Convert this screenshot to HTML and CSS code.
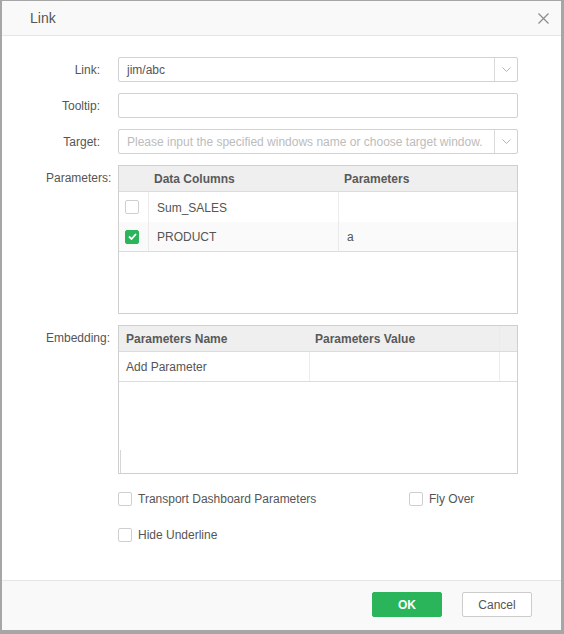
FILE: index.html
```html
<!DOCTYPE html>
<html>
<head>
<meta charset="utf-8">
<link rel="stylesheet" href="styles.css">
</head>
<body>
<div class="dialog">
  <div class="header">
    <span class="title">Link</span>
    <svg class="close" width="11" height="11" viewBox="0 0 11 11"><path d="M0.5 0.5 L10.5 10.5 M10.5 0.5 L0.5 10.5" stroke="#8c8c8c" stroke-width="1.2" fill="none"/></svg>
  </div>
  <div class="content">
    <div class="row">
      <label class="lbl">Link:</label>
      <div class="combo">
        <span class="combo-text">jim/abc</span>
        <span class="combo-btn"><svg width="9" height="5" viewBox="0 0 9 5"><path d="M0.5 0.5 L4.5 4.5 L8.5 0.5" stroke="#b5b5b5" stroke-width="1" fill="none"/></svg></span>
      </div>
    </div>
    <div class="row">
      <label class="lbl">Tooltip:</label>
      <div class="input"></div>
    </div>
    <div class="row">
      <label class="lbl">Target:</label>
      <div class="combo">
        <span class="combo-text placeholder">Please input the specified windows name or choose target window.</span>
        <span class="combo-btn"><svg width="9" height="5" viewBox="0 0 9 5"><path d="M0.5 0.5 L4.5 4.5 L8.5 0.5" stroke="#b5b5b5" stroke-width="1" fill="none"/></svg></span>
      </div>
    </div>
    <div class="row row-table">
      <label class="lbl lbl-table">Parameters:</label>
      <div class="table">
        <div class="grid params-grid thead">
          <div class="cell"></div>
          <div class="cell th">Data Columns</div>
          <div class="cell th">Parameters</div>
        </div>
        <div class="grid params-grid trow">
          <div class="cell cb-cell"><span class="cb"></span></div>
          <div class="cell td div-l">Sum_SALES</div>
          <div class="cell td div-l"></div>
        </div>
        <div class="grid params-grid trow alt last">
          <div class="cell cb-cell"><span class="cb checked"><svg width="9" height="7" viewBox="0 0 9 7"><path d="M1 3.5 L3.5 6 L8 1" stroke="#fff" stroke-width="1.8" fill="none"/></svg></span></div>
          <div class="cell td div-l">PRODUCT</div>
          <div class="cell td div-l">a</div>
        </div>
      </div>
    </div>
    <div class="row row-table">
      <label class="lbl lbl-table">Embedding:</label>
      <div class="table">
        <div class="grid embed-grid thead">
          <div class="cell th th-first">Parameters Name</div>
          <div class="cell th">Parameters Value</div>
          <div class="cell div-l"></div>
        </div>
        <div class="grid embed-grid trow last">
          <div class="cell td td-first">Add Parameter</div>
          <div class="cell td div-l"></div>
          <div class="cell div-l"></div>
        </div>
        <div class="tick"></div>
      </div>
    </div>
    <div class="options">
      <div class="opt"><span class="cb"></span><span>Transport Dashboard Parameters</span></div>
      <div class="opt"><span class="cb"></span><span>Fly Over</span></div>
      <div class="opt"><span class="cb"></span><span>Hide Underline</span></div>
    </div>
  </div>
  <div class="footer">
    <button class="btn btn-ok">OK</button>
    <button class="btn btn-cancel">Cancel</button>
  </div>
</div>
</body>
</html>
```
FILE: styles.css
```css
* { box-sizing: border-box; }
html, body { margin: 0; }
body {
  width: 564px;
  height: 634px;
  background: #a6a6a6;
  padding: 1px 3px 4px 2px;
  font-family: "Liberation Sans", Arial, sans-serif;
  font-size: 12px;
  color: #555;
  overflow: hidden;
}
.dialog {
  width: 559px;
  height: 629px;
  background: #fff;
  display: flex;
  flex-direction: column;
}
.header {
  height: 35px;
  flex: none;
  background: #f9f9f9;
  border-bottom: 1px solid #e6e6e6;
  display: flex;
  align-items: center;
  justify-content: space-between;
  padding: 0 12px 0 28px;
}
.title {
  font-size: 14px;
  color: #555;
}
.close { display: block; margin-top: 1px; }
.content {
  flex: 1;
  padding: 21px 0 0 44px;
}
.row {
  display: flex;
  gap: 18px;
  margin-bottom: 11px;
  align-items: flex-start;
}
.lbl {
  width: 54px;
  height: 25px;
  flex: none;
  text-align: right;
  line-height: 27px;
  white-space: nowrap;
  color: #555;
}
.lbl-table { height: 26px; line-height: 27px; }
.input, .combo {
  width: 400px;
  height: 25px;
  border: 1px solid #d2d2d2;
  border-radius: 2px;
  background: #fff;
}
.combo { display: flex; }
.combo-text {
  flex: 1;
  padding: 1px 0 0 8px;
  line-height: 22px;
  white-space: nowrap;
  overflow: hidden;
  color: #555;
}
.placeholder { color: #bcbcbc; }
.combo-btn {
  width: 23px;
  flex: none;
  border-left: 1px solid #d9d9d9;
  display: flex;
  align-items: center;
  justify-content: center;
}
.table {
  width: 400px;
  height: 149px;
  border: 1px solid #cfcfcf;
  background: #fff;
  overflow: hidden;
  position: relative;
}
.grid { display: grid; }
.params-grid { grid-template-columns: 29px 190px 1fr; }
.embed-grid { grid-template-columns: 190px 190px 1fr; }
.thead {
  height: 26px;
  background: #efefef;
  border-bottom: 1px solid #dcdcdc;
}
.trow { height: 30px; }
.trow.alt { background: #fafafa; }
.trow.last { border-bottom: 1px solid #dcdcdc; }
.cell {
  display: flex;
  align-items: center;
  min-width: 0;
}
.th {
  padding-left: 6px;
  font-weight: bold;
  color: #595959;
}
.th-first { padding-left: 7px; }
.td { padding: 1px 0 0 8px; color: #555; }
.td-first { padding-left: 7px; }
.div-l { border-left: 1px solid #ebebeb; }
.cb-cell { padding-left: 6px; }
.cb {
  width: 14px;
  height: 14px;
  flex: none;
  border: 1px solid #cfcfcf;
  border-radius: 2px;
  background: #fff;
  display: inline-flex;
  align-items: center;
  justify-content: center;
}
.cb.checked {
  background: #2ab55a;
  border-color: #2ab55a;
}
.tick {
  position: absolute;
  left: 1px;
  bottom: 0;
  width: 1px;
  height: 23px;
  background: #d6d6d6;
}
.options {
  margin-left: 72px;
  padding-top: 7px;
  display: grid;
  grid-template-columns: 291px auto;
  row-gap: 22px;
}
.opt {
  display: flex;
  align-items: center;
  gap: 6px;
  height: 14px;
  white-space: nowrap;
}
.footer {
  height: 50px;
  flex: none;
  background: #f9f9f9;
  border-top: 1px solid #e6e6e6;
  display: flex;
  justify-content: flex-end;
  align-items: flex-start;
  gap: 20px;
  padding: 11px 29px 0 0;
}
.btn {
  width: 70px;
  height: 25px;
  border-radius: 2px;
  font-family: "Liberation Sans", Arial, sans-serif;
  font-size: 12px;
  padding: 0;
  cursor: pointer;
}
.btn-ok {
  background: #2ab55a;
  border: 1px solid #2ab55a;
  color: #fff;
  font-weight: bold;
}
.btn-cancel {
  background: #fff;
  border: 1px solid #cccccc;
  color: #555;
}
```
